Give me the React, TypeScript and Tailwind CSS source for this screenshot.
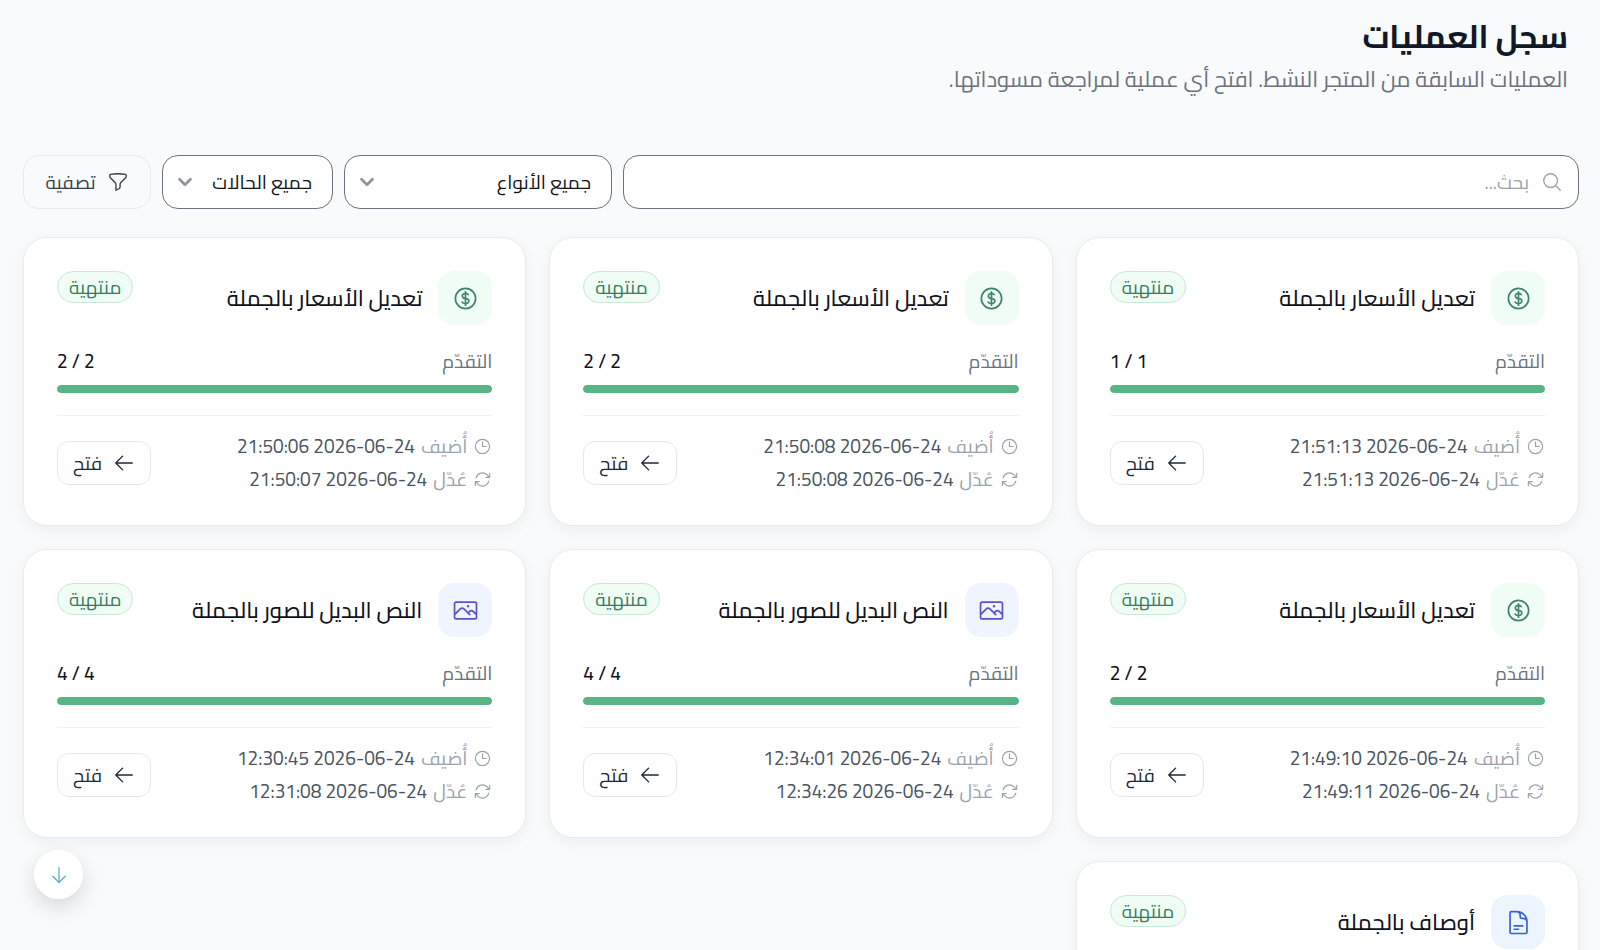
import {
  HiOutlineArrowDown,
  HiOutlineArrowLeft,
  HiOutlineArrowPath,
  HiOutlineClock,
  HiOutlineCurrencyDollar,
  HiOutlineDocumentText,
  HiOutlineFunnel,
  HiOutlineMagnifyingGlass,
  HiOutlinePhoto,
} from "react-icons/hi2";
import { FiChevronDown } from "react-icons/fi";
import type { ReactNode } from "react";

type Kind = "price" | "image" | "text";
type Operation = { kind: Kind; title: string; done: number; total: number; added: string; edited: string };

const operations: Operation[] = [
  { kind: "price", title: "تعديل الأسعار بالجملة", done: 1, total: 1, added: "21:51:13 2026-06-24", edited: "21:51:13 2026-06-24" },
  { kind: "price", title: "تعديل الأسعار بالجملة", done: 2, total: 2, added: "21:50:08 2026-06-24", edited: "21:50:08 2026-06-24" },
  { kind: "price", title: "تعديل الأسعار بالجملة", done: 2, total: 2, added: "21:50:06 2026-06-24", edited: "21:50:07 2026-06-24" },
  { kind: "price", title: "تعديل الأسعار بالجملة", done: 2, total: 2, added: "21:49:10 2026-06-24", edited: "21:49:11 2026-06-24" },
  { kind: "image", title: "النص البديل للصور بالجملة", done: 4, total: 4, added: "12:34:01 2026-06-24", edited: "12:34:26 2026-06-24" },
  { kind: "image", title: "النص البديل للصور بالجملة", done: 4, total: 4, added: "12:30:45 2026-06-24", edited: "12:31:08 2026-06-24" },
  { kind: "text", title: "أوصاف بالجملة", done: 2, total: 2, added: "12:20:10 2026-06-24", edited: "12:20:31 2026-06-24" },
];

const tiles: Record<Kind, { style: string; icon: ReactNode }> = {
  price: { style: "bg-[#effdf5] text-[#3f8464]", icon: <HiOutlineCurrencyDollar className="size-[27px]" /> },
  image: { style: "bg-[#eff4ff] text-[#5b51cf]", icon: <HiOutlinePhoto className="size-[27px]" /> },
  text: { style: "bg-[#ecf5fe] text-[#3b62d0]", icon: <HiOutlineDocumentText className="size-[27px]" /> },
};

function Stamp({ icon, label, value }: { icon: ReactNode; label: string; value: string }) {
  return (
    <div className="flex h-[33px] items-center gap-1.5 text-[19px]">
      <span className="text-[#9ca3af]">{icon}</span>
      <span className="text-[#9ca3af]">{label}</span>
      <bdi dir="ltr">{value}</bdi>
    </div>
  );
}

function Card({ op }: { op: Operation }) {
  const { style, icon } = tiles[op.kind];
  return (
    <article className="flex flex-col rounded-3xl border border-[#e8ebef] bg-white px-[33px] pt-[33px] pb-[29px] shadow-[0_4px_14px_rgba(17,24,39,0.05)]">
      <div className="flex items-start justify-between">
        <div className="flex items-center gap-4">
          <span className={`flex size-[54px] items-center justify-center rounded-2xl ${style}`}>{icon}</span>
          <h2 className="text-[22px] leading-8 font-medium text-[#10131c]">{op.title}</h2>
        </div>
        <span className="flex h-8 items-center rounded-full border border-[#c9e9d8] bg-[#effdf5] px-[11px] text-[19px] text-[#3b7a5f]">منتهية</span>
      </div>
      <div className="mt-5 flex h-8 items-center justify-between text-[19px]">
        <span className="text-[#6b7280]">التقدّم</span>
        <bdi dir="ltr" className="font-medium text-[#10131c]">{op.done} / {op.total}</bdi>
      </div>
      <div className="mt-2 h-2 overflow-hidden rounded-full bg-gray-100">
        <div className="h-full rounded-full bg-[#58b385]" style={{ width: `${(op.done / op.total) * 100}%` }} />
      </div>
      <div className="mt-[22px] flex items-center justify-between border-t border-[#f0f1f4] pt-3.5">
        <div className="text-[#4b5563]">
          <Stamp icon={<HiOutlineClock className="size-[19px]" />} label="أُضيف" value={op.added} />
          <Stamp icon={<HiOutlineArrowPath className="size-[19px]" />} label="عُدّل" value={op.edited} />
        </div>
        <button type="button" className="flex h-11 items-center gap-[11px] rounded-xl border border-[#e5e7eb] bg-white px-[15px] text-[19px] text-[#1f2937]">
          <HiOutlineArrowLeft className="size-[22px]" />
          فتح
        </button>
      </div>
    </article>
  );
}

function Select({ label, options, className }: { label: string; options: string[]; className: string }) {
  return (
    <div className={`relative ${className}`}>
      <select aria-label={label} className="h-full w-full appearance-none rounded-2xl border border-[#6b7280] bg-white ps-5 pe-10 text-[19px] text-[#10131c]">
        {options.map((o) => (
          <option key={o}>{o}</option>
        ))}
      </select>
      <FiChevronDown className="pointer-events-none absolute inset-y-0 left-3 my-auto size-[22px] text-[#9096a1]" strokeWidth={3} />
    </div>
  );
}

export default function App() {
  return (
    <div dir="rtl" lang="ar" className="min-h-screen bg-[#f9fafc] ps-5 pe-[23px] font-['Cairo','Open_Sans','DejaVu_Sans',sans-serif]">
      <header className="px-3 pt-4">
        <h1 className="text-[32px] leading-10 font-bold text-[#111827]">سجل العمليات</h1>
        <p className="mt-[7px] text-[22px] leading-8 text-[#6b7280]">العمليات السابقة من المتجر النشط. افتح أي عملية لمراجعة مسوداتها.</p>
      </header>
      <main className="ps-px pt-[60px]">
        <div className="flex h-[54px] gap-[11px]">
          <label className="flex flex-1 items-center gap-3 rounded-2xl border border-[#6b7280] bg-white px-[15px]">
            <HiOutlineMagnifyingGlass className="size-[22px] text-[#9ca3af]" />
            <input type="search" aria-label="بحث" placeholder="بحث..." className="h-full flex-1 bg-transparent text-[19px] outline-none placeholder:text-[#9ca3af]" />
          </label>
          <Select label="النوع" options={["جميع الأنواع"]} className="w-[268px]" />
          <Select label="الحالة" options={["جميع الحالات"]} className="w-[171px]" />
          <button type="button" className="flex w-32 items-center justify-center gap-[11px] rounded-2xl border border-[#e8eaee] text-[19px] text-[#374151]">
            <HiOutlineFunnel className="size-[22px]" />
            تصفية
          </button>
        </div>
        <div className="mt-7 grid grid-cols-3 gap-[23px]">
          {operations.map((op, i) => (
            <Card key={i} op={op} />
          ))}
        </div>
      </main>
      <button type="button" aria-label="إلى الأسفل" className="fixed bottom-[51px] left-[34px] flex size-[49px] items-center justify-center rounded-full bg-white text-[#5fadbd] shadow-[0_8px_20px_rgba(17,24,39,0.14)]">
        <HiOutlineArrowDown className="size-5" />
      </button>
    </div>
  );
}
